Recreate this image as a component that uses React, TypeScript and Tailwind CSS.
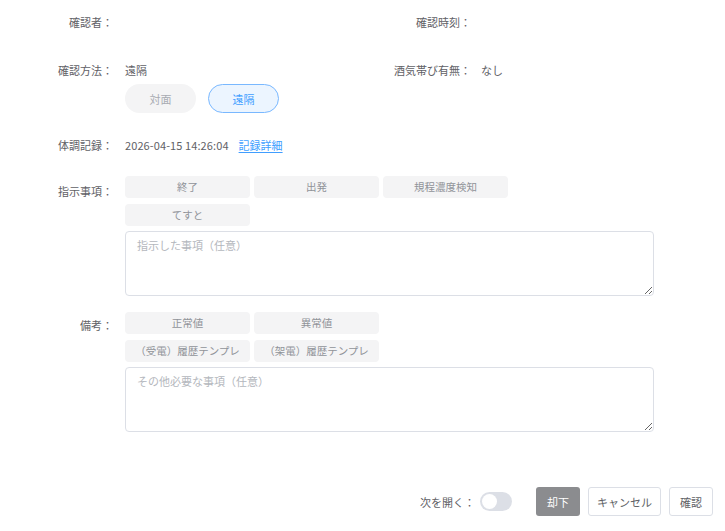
import { useState } from "react";

const font = { fontFamily: '"Noto Sans CJK JP", "Noto Sans", sans-serif' };

function Chip({ label }: { label: string }) {
  return (
    <div className="flex h-[22px] w-[125px] items-center justify-center rounded-[4px] bg-[#f4f4f5] text-[10.5px] text-[#909399]">
      {label}
    </div>
  );
}

export default function App() {
  const [method, setMethod] = useState<"face" | "remote">("remote");
  const [openNext, setOpenNext] = useState(false);

  return (
    <div className="h-[531px] w-[725px] bg-white text-[11px] leading-[16px] text-[#5f6166]" style={font}>
      {/* top rows */}
      <div className="flex pt-[14px]">
        <div className="flex w-[362px]">
          <div className="w-[113px] text-right">確認者：</div>
        </div>
        <div className="flex">
          <div className="w-[109px] text-right">確認時刻：</div>
        </div>
      </div>

      <div className="mt-[32px] flex">
        <div className="flex w-[362px]">
          <div className="w-[113px] text-right">確認方法：</div>
          <div className="ml-[12px]">遠隔</div>
        </div>
        <div className="flex">
          <div className="w-[109px] text-right">酒気帯び有無：</div>
          <div className="ml-[10px]">なし</div>
        </div>
      </div>

      <div className="mt-[6px] ml-[125px] flex gap-[12px]">
        <button
          onClick={() => setMethod("face")}
          className={
            method === "face"
              ? "h-[29px] w-[71px] rounded-full border border-[#79b8ff] bg-[#ecf5ff] text-[11px] text-[#409eff]"
              : "h-[29px] w-[71px] rounded-full border border-transparent bg-[#f4f4f5] text-[11px] text-[#a8abb2]"
          }
        >
          対面
        </button>
        <button
          onClick={() => setMethod("remote")}
          className={
            method === "remote"
              ? "h-[29px] w-[71px] rounded-full border border-[#79b8ff] bg-[#ecf5ff] text-[11px] text-[#409eff]"
              : "h-[29px] w-[71px] rounded-full border border-transparent bg-[#f4f4f5] text-[11px] text-[#a8abb2]"
          }
        >
          遠隔
        </button>
      </div>

      {/* 体調記録 */}
      <div className="mt-[24px] flex">
        <div className="w-[113px] text-right">体調記録：</div>
        <div className="ml-[12px] flex gap-[10px]">
          <span className="tracking-[0.1px]">2026-04-15 14:26:04</span>
          <a href="#" className="text-[#409eff] underline underline-offset-2">
            記録詳細
          </a>
        </div>
      </div>

      {/* 指示事項 */}
      <div className="mt-[23px] flex">
        <div className="w-[113px] pt-[7px] text-right">指示事項：</div>
        <div className="ml-[12px] flex flex-col">
          <div className="flex w-[390px] flex-wrap gap-x-[4px] gap-y-[6px]">
            <Chip label="終了" />
            <Chip label="出発" />
            <Chip label="規程濃度検知" />
            <Chip label="てすと" />
          </div>
          <textarea
            placeholder="指示した事項（任意）"
            className="mt-[5px] h-[65px] w-[529px] rounded-[4px] border border-[#dcdfe6] px-[11px] py-[5px] text-[11px] leading-[16px] text-[#606266] outline-none placeholder:text-[#b4b7bd]"
          />
        </div>
      </div>

      {/* 備考 */}
      <div className="mt-[16px] flex">
        <div className="w-[113px] pt-[5px] text-right">備考：</div>
        <div className="ml-[12px] flex flex-col">
          <div className="flex w-[260px] flex-wrap gap-x-[4px] gap-y-[6px]">
            <Chip label="正常値" />
            <Chip label="異常値" />
            <Chip label="（受電）履歴テンプレ" />
            <Chip label="（架電）履歴テンプレ" />
          </div>
          <textarea
            placeholder="その他必要な事項（任意）"
            className="mt-[5px] h-[65px] w-[529px] rounded-[4px] border border-[#dcdfe6] px-[11px] py-[5px] text-[11px] leading-[16px] text-[#606266] outline-none placeholder:text-[#b4b7bd]"
          />
        </div>
      </div>

      {/* footer */}
      <div className="mt-[55px] flex items-center justify-end pr-[12px]">
        <span>次を開く：</span>
        <button
          onClick={() => setOpenNext(!openNext)}
          className={
            openNext
              ? "ml-[5px] flex h-[19px] w-[32px] items-center justify-end rounded-full bg-[#409eff] px-[2px]"
              : "ml-[5px] flex h-[19px] w-[32px] items-center justify-start rounded-full bg-[#dcdfe6] px-[2px]"
          }
        >
          <span className="block h-[15px] w-[15px] rounded-full bg-white" />
        </button>
        <button className="ml-[24px] h-[29px] w-[44px] rounded-[3px] bg-[#8b8c8f] text-[11px] text-white">却下</button>
        <button className="ml-[8px] h-[29px] w-[73px] rounded-[3px] border border-[#dcdfe6] bg-white text-[11px] text-[#606266]">
          キャンセル
        </button>
        <button className="ml-[8px] h-[29px] w-[44px] rounded-[3px] border border-[#dcdfe6] bg-white text-[11px] text-[#606266]">
          確認
        </button>
      </div>
    </div>
  );
}
